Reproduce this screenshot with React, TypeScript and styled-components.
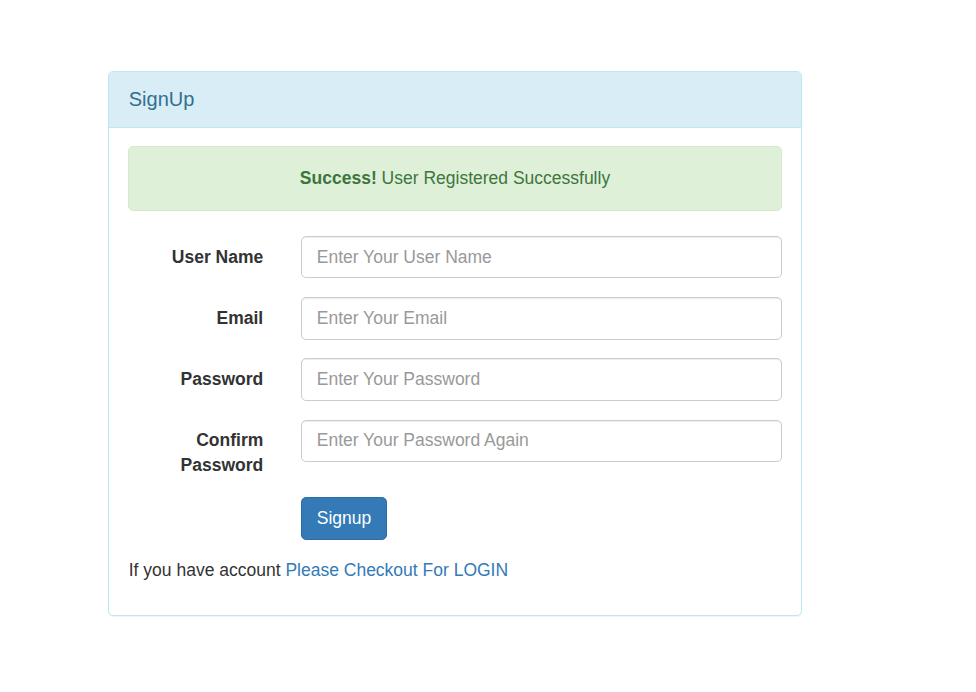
import React from "react";
import styled, { createGlobalStyle } from "styled-components";

const Global = createGlobalStyle`
  html, body { margin: 0; padding: 0; background: #fff; }
  body {
    font-family: "Liberation Sans", Arial, Helvetica, sans-serif;
    font-size: 17.5px;
    line-height: 25px;
    color: #333;
  }
  * { box-sizing: border-box; }
`;

const Page = styled.div`
  padding: 71px 0 40px 108px;
`;

const Panel = styled.div`
  width: 694px;
  background: #fff;
  border: 1px solid #bce8f1;
  border-radius: 5px;
  box-shadow: 0 1px 1px rgba(0, 0, 0, 0.05);
  overflow: hidden;
`;

const Heading = styled.div`
  background: #d9edf7;
  color: #31708f;
  border-bottom: 1px solid #bce8f1;
  padding: 12.5px 18.75px 12.5px 19.75px;
  font-size: 20px;
  line-height: 29.5px;
`;

const Body = styled.div`
  padding: 18.75px;
`;

const Alert = styled.div`
  background: #dff0d8;
  border: 1px solid #d6e9c6;
  color: #3c763d;
  border-radius: 5px;
  padding: 18.75px;
  margin-bottom: 25px;
  text-align: center;
`;

const FormRow = styled.div`
  display: grid;
  grid-template-columns: 25% 75%;
  margin: 0 -18.75px 18.75px;
`;

const Label = styled.label`
  padding: 8.75px 18.75px 0;
  text-align: right;
  font-weight: bold;
`;

const Field = styled.div<{ $offset?: boolean }>`
  padding: 0 18.75px;
  grid-column: ${(p) => (p.$offset ? "2 / 3" : "auto")};
`;

const Input = styled.input`
  display: block;
  width: 100%;
  height: 42.5px;
  padding: 7.5px 15px;
  font-family: inherit;
  font-size: 17.5px;
  line-height: 25px;
  color: #555;
  background: #fff;
  border: 1px solid #ccc;
  border-radius: 5px;
  box-shadow: inset 0 1px 1px rgba(0, 0, 0, 0.075);
  outline: none;
  &::placeholder { color: #999; }
`;

const Button = styled.button`
  display: inline-block;
  height: 42.5px;
  padding: 7.5px 15px;
  font-family: inherit;
  font-size: 17.5px;
  line-height: 25px;
  color: #fff;
  background: #337ab7;
  border: 1px solid #2e6da4;
  border-radius: 5px;
  cursor: pointer;
`;

const Note = styled.p`
  margin: 3px 0 12.5px;
  padding-left: 1px;
`;

const Link = styled.a`
  color: #337ab7;
  text-decoration: none;
`;

const fields = [
  { label: "User Name", placeholder: "Enter Your User Name", type: "text" },
  { label: "Email", placeholder: "Enter Your Email", type: "email" },
  { label: "Password", placeholder: "Enter Your Password", type: "password" },
  { label: "Confirm Password", placeholder: "Enter Your Password Again", type: "password" },
];

export default function App() {
  return (
    <>
      <Global />
      <Page>
        <Panel>
          <Heading>SignUp</Heading>
          <Body>
            <Alert>
              <strong>Success!</strong> User Registered Successfully
            </Alert>
            {fields.map((f) => (
              <FormRow key={f.label}>
                <Label>{f.label}</Label>
                <Field>
                  <Input type={f.type} placeholder={f.placeholder} />
                </Field>
              </FormRow>
            ))}
            <FormRow>
              <Field $offset>
                <Button type="button">Signup</Button>
              </Field>
            </FormRow>
            <Note>
              If you have account <Link href="#">Please Checkout For LOGIN</Link>
            </Note>
          </Body>
        </Panel>
      </Page>
    </>
  );
}
